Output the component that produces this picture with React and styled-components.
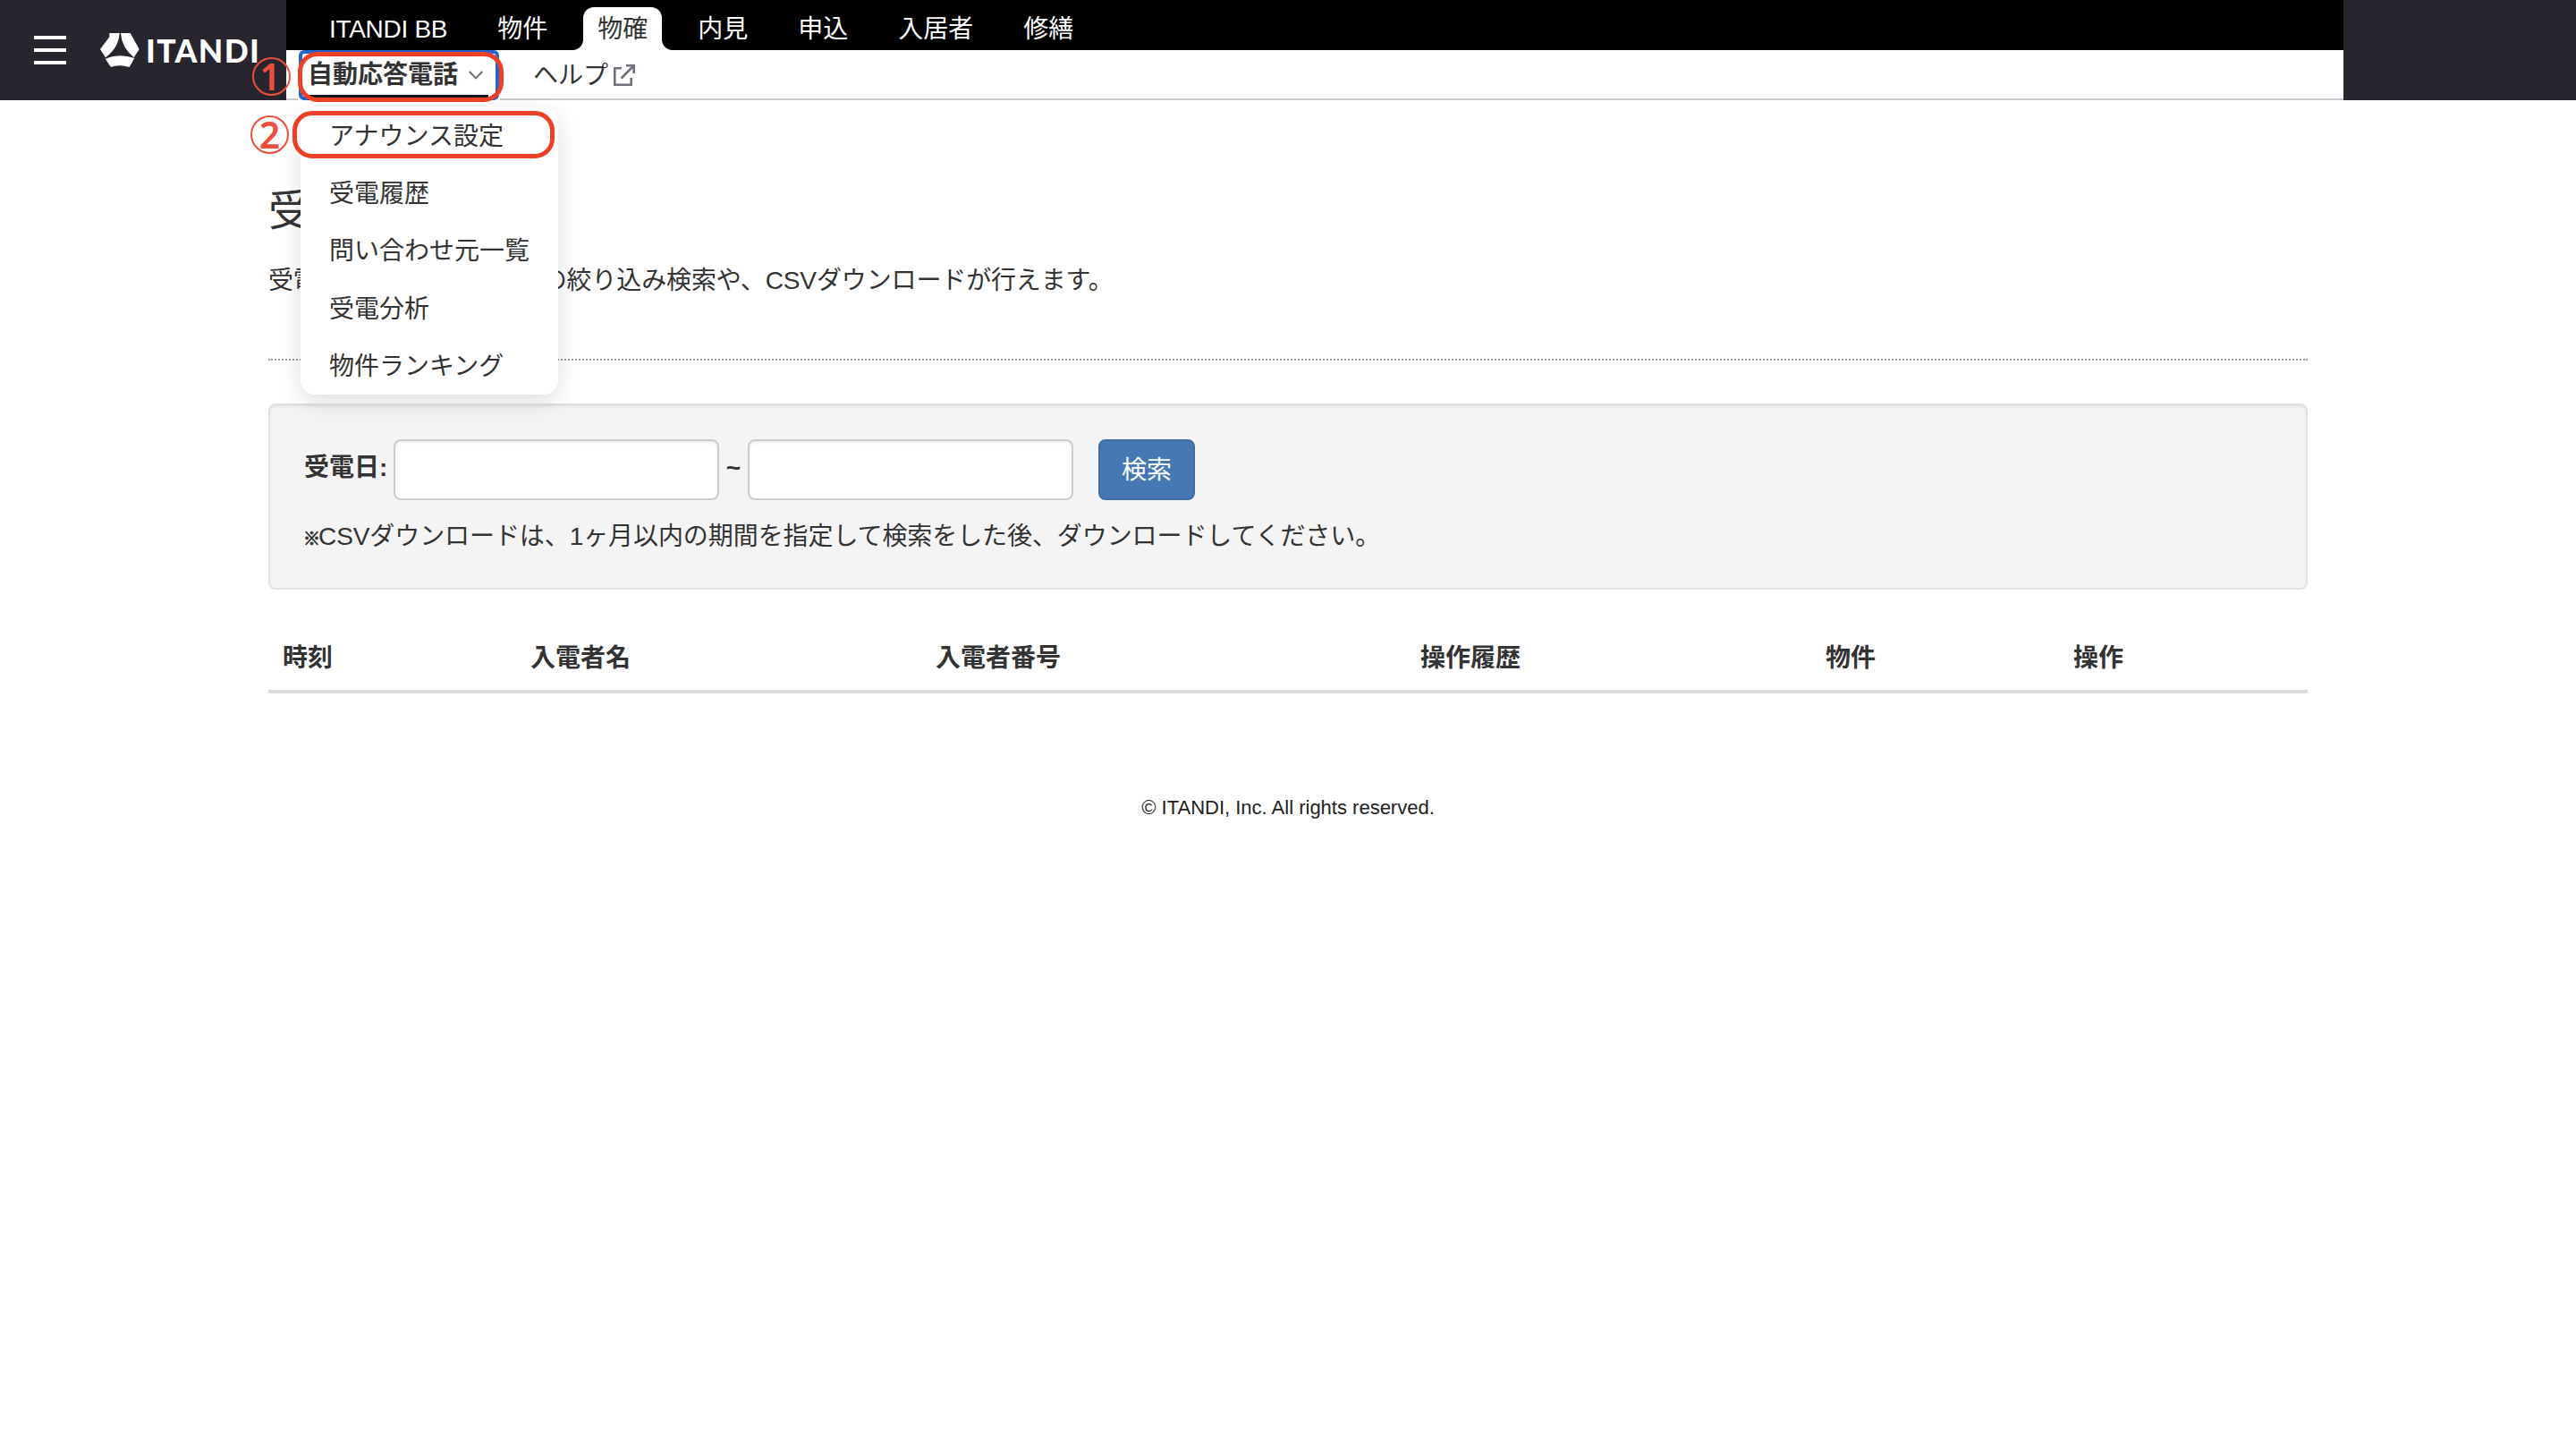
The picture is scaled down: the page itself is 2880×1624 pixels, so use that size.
import React from 'react';
import styled, { createGlobalStyle } from 'styled-components';

const GlobalStyle = createGlobalStyle`
    * {
        box-sizing: border-box;
    }

    body {
        margin: 0;
        background: #fff;
        color: #333;
        font-family: "Liberation Sans", "Noto Sans CJK JP", sans-serif;
        font-size: 28px;
        line-height: 40px;
    }
`;

const HeaderStyles = styled.header`
    position: relative;
    display: flex;
    height: 112px;
    background: #28252f;
`;

const Brand = styled.div`
    display: flex;
    align-items: center;
    width: 320px;
    padding-left: 38px;
`;

const MenuButton = styled.div`
    display: flex;
    flex-direction: column;
    gap: 10px;
    width: 36px;
    margin-right: 38px;

    span {
        height: 4px;
        background: #fff;
    }
`;

const LogoText = styled.span`
    margin-left: 7px;
    margin-top: 2px;
    color: #fff;
    font-family: Lato, sans-serif;
    font-size: 35.5px;
    font-weight: 900;
    letter-spacing: 1.4px;
    white-space: nowrap;
`;

const Navigation = styled.div`
    width: 2300px;
    background: #fff;
`;

const TabBar = styled.nav`
    display: flex;
    gap: 24px;
    height: 56px;
    padding: 8px 0 0 32px;
    background: #000;
`;

const Tab = styled.div`
    position: relative;
    height: 48px;
    padding: 0 16px;
    line-height: 49px;
    white-space: nowrap;
    color: ${props => props.$active ? '#333' : '#fff'};
    background: ${props => props.$active ? '#fff' : 'transparent'};
    border-radius: 12px 12px 0 0;
    letter-spacing: ${props => props.$spacing || 'normal'};

    &::before,
    &::after {
        content: ${props => props.$active ? '""' : 'none'};
        position: absolute;
        bottom: 0;
        width: 12px;
        height: 12px;
    }

    &::before {
        right: 100%;
        background: radial-gradient(circle at 0 0, #000 11.5px, #fff 12.5px);
    }

    &::after {
        left: 100%;
        background: radial-gradient(circle at 100% 0, #000 11.5px, #fff 12.5px);
    }
`;

const SubBar = styled.div`
    display: flex;
    height: 56px;
    padding-left: 13px;
    border-bottom: 2px solid #c8c7ce;
`;

const Dropdown = styled.div`
    position: relative;
    height: 56px;
    width: 226px;
    padding: 0 1px;
    background: #fff;
`;

const DropdownToggle = styled.div`
    display: flex;
    height: 56px;
    padding: 0 8px;
    border: 4px solid #2563d0;
    border-radius: 6px;
`;

const ToggleLabel = styled.div`
    display: flex;
    align-items: center;
    gap: 12px;
    width: 202px;
    height: 52px;
    margin-left: -2px;
    padding-top: 1px;
    font-weight: bold;
    line-height: 40px;
    border-bottom: 6px solid #17141f;
    white-space: nowrap;
`;

const DropdownMenu = styled.div`
    position: absolute;
    top: 64px;
    left: 3px;
    z-index: 2;
    width: 288px;
    height: 321px;
    background: #fff;
    border-radius: 16px;
    box-shadow: 0 8px 24px rgba(40, 37, 47, 0.15);
`;

const MenuItem = styled.div`
    height: 64.2px;
    padding-left: 32px;
    line-height: 65px;
    white-space: nowrap;
`;

const HelpLink = styled.div`
    display: flex;
    align-items: center;
    gap: 6px;
    height: 56px;
    margin-left: 37px;
    padding-top: 1px;

    svg {
        margin-bottom: 1px;
    }
`;

const Container = styled.main`
    width: 2280px;
    margin: 0 auto;
`;

const PageTitle = styled.h1`
    margin: 96px 0 0;
    font-size: 48px;
    font-weight: 400;
    line-height: 56px;
`;

const Lead = styled.p`
    margin: 30px 0 0;
    letter-spacing: -0.13px;
`;

const Divider = styled.hr`
    margin: 67px 0 48px;
    border: 0;
    border-top: 2px dotted #999;
`;

const Well = styled.section`
    height: 208px;
    padding: 38px;
    background: #f4f4f4;
    border: 2px solid #e1e1e1;
    border-radius: 8px;
    box-shadow: inset 0 2px 3px rgba(0, 0, 0, 0.06);
`;

const SearchForm = styled.div`
    display: flex;
    height: 68px;
`;

const FormLabel = styled.label`
    width: ${props => props.$width}px;
    line-height: 63px;
    font-weight: bold;
    text-align: ${props => props.$center ? 'center' : 'left'};
`;

const DateInput = styled.input`
    width: 364px;
    height: 68px;
    border: 2px solid #ccc;
    border-radius: 8px;
    box-shadow: inset 0 2px 3px rgba(0, 0, 0, 0.08);
`;

const SearchButton = styled.button`
    width: 108px;
    height: 68px;
    margin-left: 28px;
    padding: 1px 0 0;
    color: #fff;
    font: inherit;
    background: #4679b3;
    border: 2px solid #3f6ca2;
    border-radius: 8px;
`;

const Note = styled.p`
    margin: 21px 0 0;
    letter-spacing: -0.08px;
`;

const NoteMark = styled.span`
    display: inline-block;
    width: 17px;
    margin-left: -1px;
    font-family: "Noto Sans CJK JP", sans-serif;
    font-size: 19px;
    line-height: 20px;
    -webkit-text-stroke: 0.8px #333;
`;

const Table = styled.div`
    display: grid;
    grid-template-columns: 277px 453px 542px 453px 277px 278px;
    height: 80px;
    margin-top: 36px;
    border-bottom: 4px solid #ddd;
`;

const HeadCell = styled.div`
    padding: 21px 16px 0;
    font-weight: bold;
`;

const Footer = styled.footer`
    margin-top: 108px;
    color: #222;
    font-size: 22px;
    text-align: center;
`;

const Highlight = styled.div`
    position: absolute;
    z-index: 3;
    left: ${props => props.$left}px;
    top: ${props => props.$top}px;
    width: ${props => props.$width}px;
    height: ${props => props.$height}px;
    border: 5px solid #ec4126;
    border-radius: 22px;
`;

const StepNumber = styled.div`
    position: absolute;
    z-index: 4;
    left: ${props => props.$left}px;
    top: ${props => props.$top}px;
    width: 43px;
    height: 43px;
    border: 2px solid #ec4f3c;
    border-radius: 50%;
    color: #ec4f3c;
    font-family: "Noto Sans", sans-serif;
    font-size: 41px;
    font-weight: 600;
    line-height: 38px;
    text-align: center;
    text-indent: ${props => props.$indent || 0}px;
`;

const tabs = ['ITANDI BB', '物件', '物確', '内見', '申込', '入居者', '修繕'];
const menuItems = ['アナウンス設定', '受電履歴', '問い合わせ元一覧', '受電分析', '物件ランキング'];
const columns = ['時刻', '入電者名', '入電者番号', '操作履歴', '物件', '操作'];

const LogoMark = () => (
    <svg width="44" height="38" viewBox="336 111 132 114" fill="#fff">
        <path d="M367 111H401Q398 160 354 193L336 165L367 124Z" />
        <path d="M405 111H437L467 165L449 193Q408 160 405 111Z" />
        <path d="M353 197Q400 178 451 195L434 225Q400 215 372 225Z" />
    </svg>
);

const ChevronIcon = () => (
    <svg width="16" height="10" viewBox="0 0 16 10" fill="none" stroke="#716f7a" strokeWidth="2">
        <path d="M0.8 1L8 8.4L15.2 1" />
    </svg>
);

const ExternalIcon = () => (
    <svg width="24" height="24" viewBox="0 0 24 24" fill="none" stroke="#716f7a" strokeWidth="2.6">
        <path d="M9 4.3H1.3V22.7H19.7V15" />
        <path d="M14 1.3H22.7V10" />
        <path d="M22 2L8.5 15.5" />
    </svg>
);

const Header = () => {
    return (
        <HeaderStyles>
            <Brand>
                <MenuButton>
                    <span />
                    <span />
                    <span />
                </MenuButton>
                <LogoMark />
                <LogoText>ITANDI</LogoText>
            </Brand>
            <Navigation>
                <TabBar>
                    {tabs.map(tab => (
                        <Tab key={tab} $active={tab === '物確'} $spacing={tab === 'ITANDI BB' ? '-0.3px' : undefined}>
                            {tab}
                        </Tab>
                    ))}
                </TabBar>
                <SubBar>
                    <Dropdown>
                        <DropdownToggle>
                            <ToggleLabel>
                                自動応答電話
                                <ChevronIcon />
                            </ToggleLabel>
                        </DropdownToggle>
                        <DropdownMenu>
                            {menuItems.map(item => (
                                <MenuItem key={item}>{item}</MenuItem>
                            ))}
                        </DropdownMenu>
                    </Dropdown>
                    <HelpLink>
                        ヘルプ
                        <ExternalIcon />
                    </HelpLink>
                </SubBar>
            </Navigation>
            <StepNumber $left={282} $top={64} $indent={-3}>1</StepNumber>
            <StepNumber $left={280} $top={129}>2</StepNumber>
            <Highlight $left={333} $top={58} $width={230} $height={56} />
            <Highlight $left={327} $top={124} $width={293} $height={53} />
        </HeaderStyles>
    );
};

const App = () => {
    return (
        <>
            <GlobalStyle />
            <Header />
            <Container>
                <PageTitle>受電</PageTitle>
                <Lead>受電履歴の確認や、履歴の絞り込み検索や、CSVダウンロードが行えます。</Lead>
                <Divider />
                <Well>
                    <SearchForm>
                        <FormLabel $width={100}>受電日:</FormLabel>
                        <DateInput />
                        <FormLabel as="span" $width={32} $center>~</FormLabel>
                        <DateInput />
                        <SearchButton>検索</SearchButton>
                    </SearchForm>
                    <Note>
                        <NoteMark>※</NoteMark>
                        CSVダウンロードは、1ヶ月以内の期間を指定して検索をした後、ダウンロードしてください。
                    </Note>
                </Well>
                <Table>
                    {columns.map(column => (
                        <HeadCell key={column}>{column}</HeadCell>
                    ))}
                </Table>
                <Footer>© ITANDI, Inc. All rights reserved.</Footer>
            </Container>
        </>
    );
};

export default App;
